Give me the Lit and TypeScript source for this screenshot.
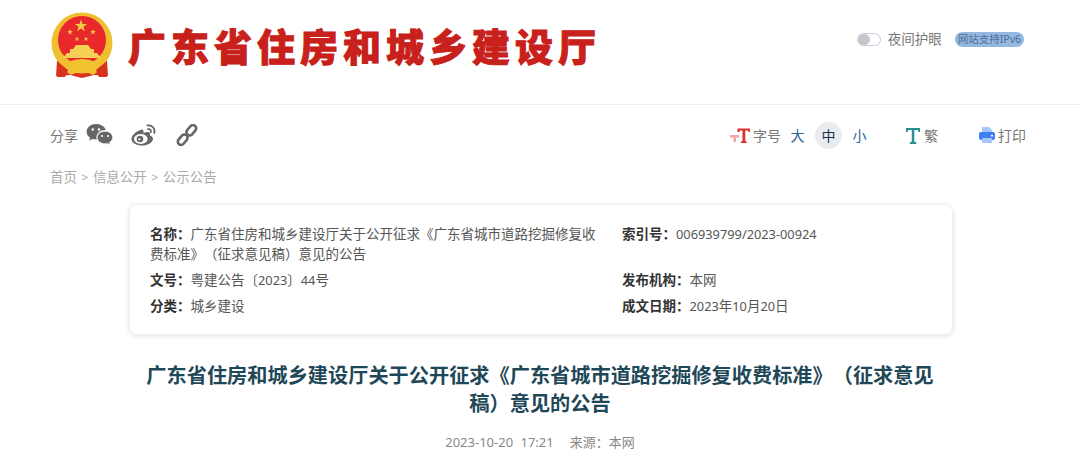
import { LitElement, html, css, svg } from "lit";
import { customElement } from "lit/decorators.js";

const star = (cx: number, cy: number, r: number) => {
  const p: string[] = [];
  for (let i = 0; i < 10; i++) {
    const a = -Math.PI / 2 + (i * Math.PI) / 5;
    const q = i % 2 ? r * 0.4 : r;
    p.push(`${(cx + q * Math.cos(a)).toFixed(2)},${(cy + q * Math.sin(a)).toFixed(2)}`);
  }
  return svg`<polygon points=${p.join(" ")} fill="#f6c945"/>`;
};

@customElement("app-root")
export class AppRoot extends LitElement {
  static styles = css`
    :host {
      display: block;
      width: 1080px;
      height: 475px;
      overflow: hidden;
      background: #fff;
      font-family: "Noto Sans", "Noto Sans CJK SC", sans-serif;
      color: #666;
      text-spacing-trim: space-all;
    }
    .top {
      height: 105px;
      box-sizing: border-box;
      border-bottom: 1px solid #eee;
      padding: 12px 56px 0 50px;
      display: flex;
      align-items: flex-start;
    }
    .emblem { width: 64px; height: 68px; flex: none; }
    .brand {
      margin: 7px 0 0 14px;
      font-family: "Noto Sans CJK SC", sans-serif;
      font-size: 38px;
      line-height: 52px;
      font-weight: 900;
      color: #c8201a;
      letter-spacing: 5px;
      -webkit-text-stroke: 0.9px #c8201a;
      white-space: nowrap;
    }
    .night {
      margin-left: auto;
      margin-top: 18px;
      display: flex;
      align-items: center;
      font-size: 13.5px;
      line-height: 18px;
      color: #777;
    }
    .toggle {
      width: 24px; height: 13px;
      box-sizing: border-box;
      border: 1px solid #c8ccd2;
      border-radius: 7px;
      margin-right: 7px;
      display: flex;
    }
    .toggle i { width: 12px; height: 11px; border-radius: 50%; background: #c3c7cd; }
    .ipv6 {
      margin-left: 13px;
      height: 15px;
      padding: 0 3px;
      border-radius: 8px;
      background: #93b8e2;
      color: #4f6f93;
      font-size: 10.5px;
      line-height: 15px;
    }
    .tools {
      display: flex;
      align-items: center;
      height: 30px;
      margin-top: 15px;
      padding: 0 54px 0 50px;
      font-size: 14px;
      color: #777;
    }
    .share { display: flex; align-items: center; }
    .share svg { display: block; }
    .share .wx { margin-left: 8px; }
    .share .wb { margin-left: 16px; }
    .share .ln { margin-left: 18px; }
    .right { margin-left: auto; display: flex; align-items: center; }
    .zh { margin-left: 1px; }
    .size { width: 27px; height: 27px; border-radius: 50%; text-align: center; line-height: 27px; color: #2a6496; }
    .size.on { background: #e9ecef; color: #1c2c55; }
    .gap1 { margin-left: 3px; }
    .gap2 { margin-left: 4px; }
    .trad { margin-left: 32px; display: flex; align-items: center; }
    .trad span { margin-left: 3px; }
    .print { margin-left: 40px; display: flex; align-items: center; }
    .print span { margin-left: 2px; }
    .crumbs {
      margin-top: 17px;
      padding-left: 50px;
      font-size: 13.5px;
      line-height: 20px;
      color: #aaa;
    }
    .crumbs span { margin: 0 4.500px; font-size: 12px; }
    .card {
      box-sizing: border-box;
      width: 824px;
      height: 131px;
      margin: 16px 0 0 129px;
      padding: 19px 20px 0;
      border-radius: 8px;
      border: 1px solid #eceef0;
      box-shadow: 0 1px 5px rgba(0, 0, 0, 0.12);
      display: grid;
      grid-template-columns: 472px 1fr;
      grid-auto-rows: min-content;
      font-size: 13.5px;
      color: #555;
      line-height: 20px;
    }
    .card b { font-weight: 700; color: #333; }
    .card i { font-style: normal; font-size: 12.8px; }
    .card > div:nth-child(n + 3) { margin-top: 6px; }
    .name { width: 450px; }
    .name span { display: block; }
    h1 {
      margin: 26px auto 0;
      width: 800px;
      text-align: center;
      font-size: 20.2px;
      line-height: 28px;
      font-weight: 700;
      color: #1e4858;
    }
    .meta {
      margin-top: 15px;
      text-align: center;
      font-size: 13px;
      line-height: 20px;
      color: #888;
      word-spacing: 4px;
    }
    .meta span { margin-left: 16px; }
  `;

  render() {
    return html`
      <div class="top">
        <svg class="emblem" viewBox="0 0 64 68">
          <path d="M7 49 L6 64 L20 63 L32 66 L44 63 L58 64 L57 49 Z" fill="#d8321f"/>
          <circle cx="32" cy="31" r="30.500" fill="#f0bf30"/>
          <circle cx="32" cy="28" r="24" fill="#e8282a"/>
          ${star(31, 14, 6.5)}${star(20, 20, 3)}${star(43, 20, 3)}${star(27, 27, 2.6)}${star(36, 27, 2.6)}
          <path d="M13 46 H51 L47 41 H44 V37 H41 L38 33 H26 L23 37 H20 V41 H17 Z" fill="#f6cf55"/>
          <path d="M18 50 Q32 44 46 50 L50 58 L43 63 L32 58 L21 63 L14 58 Z" fill="#f2c230"/>
          <path d="M8 50 L18 58 L15 65 L7 65 Z M56 50 L46 58 L49 65 L57 65 Z" fill="#d8321f"/>
        </svg>
        <div class="brand">广东省住房和城乡建设厅</div>
        <div class="night">
          <div class="toggle"><i></i></div>夜间护眼<div class="ipv6">网站支持IPv6</div>
        </div>
      </div>

      <div class="tools">
        <div class="share">
          分享
          <svg class="wx" width="28" height="24" viewBox="0 0 28 24" fill="#666">
            <path d="M10 1C4.800 1 .6 4.500.6 8.800c0 2.500 1.400 4.600 3.500 6L3.200 17.800l3.300-1.700c1.100.3 2.300.5 3.500.5h.9c-.3-.8-.4-1.600-.4-2.400 0-4 3.800-7.200 8.500-7.200h.7C18.800 3.500 14.800 1 10 1z"/>
            <path d="M19 8.200c-4.300 0-7.800 2.800-7.800 6.300s3.500 6.300 7.800 6.300c.9 0 1.800-.1 2.600-.4l2.700 1.500-.7-2.600c1.900-1.200 3.100-2.900 3.100-4.800 0-3.500-3.400-6.300-7.700-6.300z" stroke="#fff" stroke-width=".7"/>
            <circle cx="6.800" cy="6.500" r="1.200" fill="#fff"/><circle cx="13" cy="6.500" r="1.200" fill="#fff"/>
            <circle cx="16" cy="13" r="1" fill="#fff"/><circle cx="22" cy="13" r="1" fill="#fff"/>
          </svg>
          <svg class="wb" width="28" height="24" viewBox="0 0 28 24" fill="none">
            <path d="M12 6.500C6.500 8 1.500 12 1.500 16c0 4 5 6.500 10.500 6.500 6 0 11-3.300 11-6.800 0-2-2-3-3.200-3.300.8-2 .3-3.500-2.800-3.300-1.500.1-2.700.6-3.500 1 .2-2.600-.5-4-1.500-3.600z" fill="#666"/>
            <ellipse cx="10.800" cy="16" rx="6.800" ry="5" fill="#fff"/>
            <circle cx="10" cy="16" r="3.300" fill="#666"/>
            <circle cx="9.400" cy="16.300" r="1.100" fill="#fff"/>
            <path d="M17.500 2.500c4.500-.8 8 3 6.800 7.500M18 6.200c2.300-.4 3.300 1.300 2.800 3" stroke="#666" stroke-width="1.800" stroke-linecap="round"/>
          </svg>
          <svg class="ln" width="22" height="22" viewBox="0 0 22 22" fill="none" stroke="#666" stroke-width="2.600">
            <rect x="-6.500" y="-3" width="11.500" height="6.500" rx="3.200" transform="translate(7 15) rotate(-50)"/>
            <rect x="-5" y="-3.500" width="11.500" height="6.500" rx="3.200" transform="translate(15 7) rotate(-50)"/>
          </svg>
        </div>
        <div class="right">
          <svg width="23" height="17" viewBox="0 0 23 17">
            <path d="M1 8h9v2.500H7V15H4.500v-4.500H1z" fill="#f0a8a0"/>
            <path d="M8.500 1.500H21V5h-1.500L19 3.500h-2.700V14l1.500.8V16h-6v-1.200l1.700-.8V3.500H11L10.300 5H8.500z" fill="#d8352e"/>
          </svg>
          <span class="zh">字号</span>
          <div class="size gap1">大</div>
          <div class="size on gap2">中</div>
          <div class="size gap2">小</div>
          <div class="trad">
            <svg width="16" height="17" viewBox="0 0 16 17">
              <path d="M1 1h14v4h-1.500l-.7-2H9.300v11.500l2 1V17H4.800v-1.500l2-1V3H3.200l-.7 2H1z" fill="#2a8f96"/>
            </svg>
            <span>繁</span>
          </div>
          <div class="print">
            <svg width="18" height="18" viewBox="0 0 18 18">
              <path d="M4 1h7l3 3v4H4z" fill="#a9c6fb"/>
              <rect x="1" y="6" width="16" height="8" rx="2" fill="#3f7ff0"/>
              <rect x="4" y="12" width="10" height="5" rx="1" fill="#a9c6fb"/>
              <rect x="13" y="9" width="2" height="1.500" fill="#fff"/>
            </svg>
            <span>打印</span>
          </div>
        </div>
      </div>

      <div class="crumbs">首页<span>&gt;</span>信息公开<span>&gt;</span>公示公告</div>

      <div class="card">
        <div class="name"><b>名称：</b>广东省住房和城乡建设厅关于公开征求《广东省城市道路挖掘修复收<span>费标准》（征求意见稿）意见的公告</span></div>
        <div><b>索引号：</b><i>006939799/2023-00924</i></div>
        <div><b>文号：</b>粤建公告〔<i>2023</i>〕<i>44</i>号</div>
        <div><b>发布机构：</b>本网</div>
        <div><b>分类：</b>城乡建设</div>
        <div><b>成文日期：</b><i>2023</i>年<i>10</i>月<i>20</i>日</div>
      </div>

      <h1>广东省住房和城乡建设厅关于公开征求《广东省城市道路挖掘修复收费标准》（征求意见稿）意见的公告</h1>
      <div class="meta">2023-10-20 17:21<span>来源：本网</span></div>
    `;
  }
}
